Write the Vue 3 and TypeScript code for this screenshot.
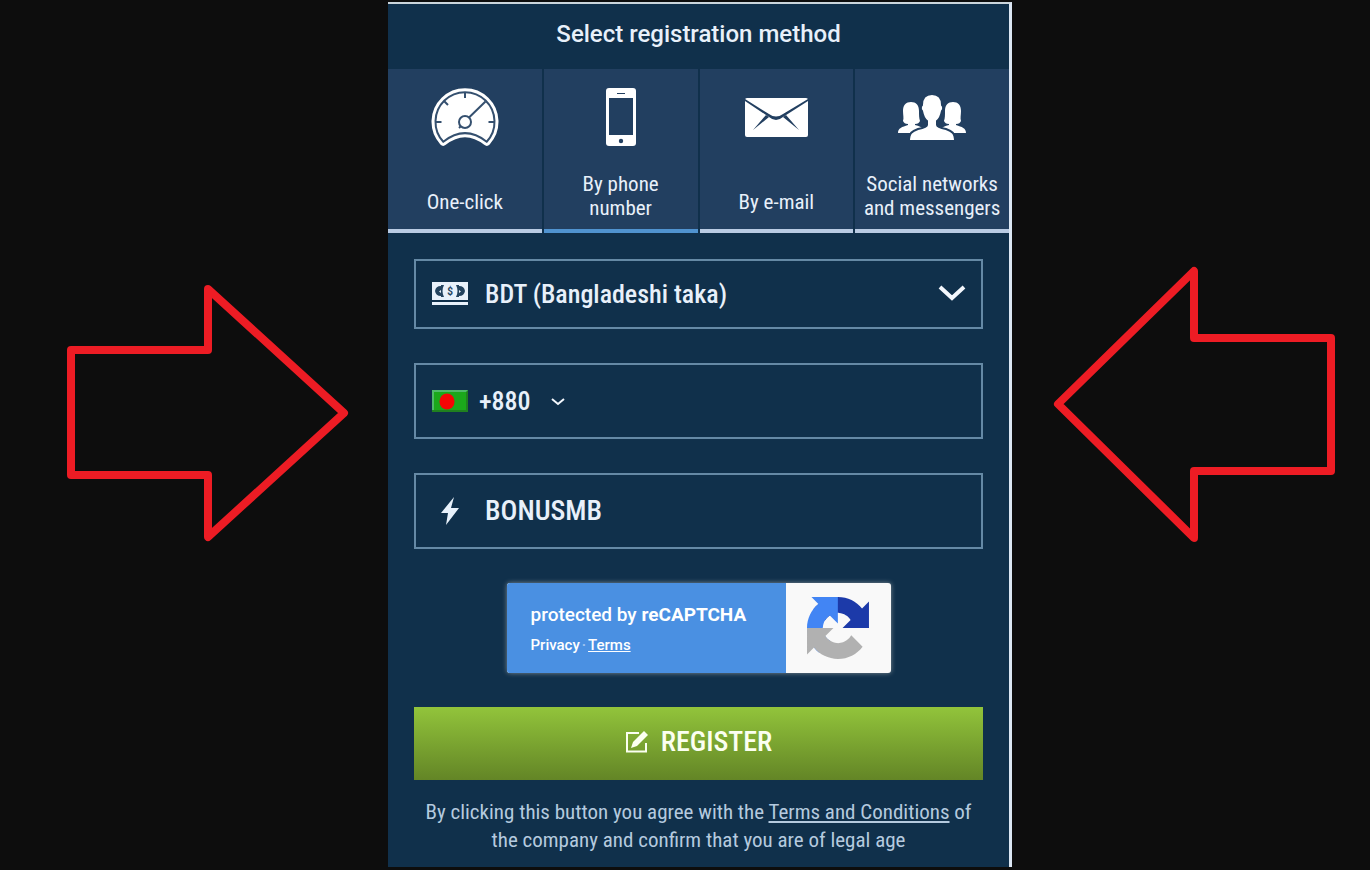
<script setup lang="ts">
import { ref } from 'vue'

type Method = 'click' | 'phone' | 'email' | 'social'

const methods: { id: Method; lines: string[] }[] = [
  { id: 'click', lines: ['One-click'] },
  { id: 'phone', lines: ['By phone', 'number'] },
  { id: 'email', lines: ['By e-mail'] },
  { id: 'social', lines: ['Social networks', 'and messengers'] },
]

const active = ref<Method>('phone')
const currency = ref('BDT')
const dialCode = ref('+880')
const phone = ref('')
const promo = ref('BONUSMB')
</script>

<template>
  <div class="stage">
    <svg class="arrow" viewBox="0 0 388 264" aria-hidden="true">
      <path d="M71 70H208V9L344 133L208 257V195H71Z" />
    </svg>

    <main class="panel">
      <h1 class="title">Select registration method</h1>

      <div class="tabs" role="tablist">
        <button
          v-for="m in methods"
          :key="m.id"
          type="button"
          role="tab"
          class="tab"
          :class="{ active: active === m.id }"
          :aria-selected="active === m.id"
          @click="active = m.id"
        >
          <svg v-if="m.id === 'click'" class="tab-icon" viewBox="0 0 70 60">
            <path class="gauge-body" d="M13.3 54.7A29.5 29.5 0 1 1 56.7 54.7Q35 37.5 13.3 54.7Z" />
            <path class="gauge-ring" d="M13.3 54.7A29.5 29.5 0 1 1 56.7 54.7Q35 37.5 13.3 54.7Z" />
            <path class="mark" d="M35 5v6M5.500 35h6M64.500 35h-6M14 14l4 4M39 30.500L55.500 14.500" />
            <circle class="mark hub" cx="35" cy="35" r="6" />
            <path class="mark" d="M31 39l-2 2" />
          </svg>
          <svg v-else-if="m.id === 'phone'" class="tab-icon" viewBox="0 0 70 60">
            <rect class="white" x="20" y="1" width="30" height="58" rx="3" />
            <rect class="navy" x="23" y="11" width="24" height="37" />
            <rect class="navy" x="31" y="6" width="8" height="1" />
            <circle class="navy" cx="35" cy="54" r="2.200" />
          </svg>
          <svg v-else-if="m.id === 'email'" class="tab-icon" viewBox="0 0 70 60">
            <rect class="white" x="4" y="11" width="63" height="39" rx="2" />
            <path class="fold" d="M4 12L28 27Q35 32 42 27L67 12V14L42 30Q35 36 28 30L4 14Z" />
            <path class="fold" d="M25 28L28 30L12 43ZM45 28L42 30L58 43Z" />
          </svg>
          <svg v-else class="tab-icon" viewBox="0 0 70 60">
            <path class="white" d="M1 46c0-5 4-6 10-8v-1c-3 0-4-1-5-3 1-3 0-6 0-10 0-6 3-9 8-9s8 3 8 9c0 4 0 7 1 10-1 2-2 3-5 3v1c4 1 7 2 8 4v4z" />
            <path class="white" d="M69 46c0-5-4-6-10-8v-1c3 0 4-1 5-3-1-3 0-6 0-10 0-6-3-9-8-9s-8 3-8 9c0 4 0 7-1 10 1 2 2 3 5 3v1c-4 1-7 2-8 4v4z" />
            <path class="person" d="M12 54c0-8 3-10 9-12 5-1 9-2 9-4v-4c-3-2-4-5-5-10-2-2-1-5 0-6 0-7 4-11 10-11s10 4 10 11c1 1 2 4 0 6-1 5-2 8-5 10v4c0 2 4 3 9 4 6 2 9 4 9 12z" />
          </svg>
          <span class="tab-label"><span v-for="l in m.lines" :key="l" class="line">{{ l }}</span></span>
        </button>
      </div>

      <form class="form" @submit.prevent>
        <div class="field short">
          <svg class="field-icon" viewBox="0 0 36 24" aria-hidden="true">
            <rect class="pale" width="36" height="18" />
            <path class="dark" d="M9 4A6 6 0 0 0 3 9a6 6 0 0 0 6 5V11L7 9.500 9 8zM27 4A6 6 0 0 1 33 9a6 6 0 0 1-6 5V11L29 9.500 27 8z" />
            <path class="dark" d="M9 3h3Q9 9 12 15h-3zM27 3h-3Q27 9 24 15h3z" />
            <text class="dollar" x="18" y="13">$</text>
            <rect class="pale" y="20" width="36" height="3" />
          </svg>
          <select v-model="currency" class="currency" aria-label="Currency">
            <option value="BDT">BDT (Bangladeshi taka)</option>
          </select>
          <svg class="chevron" viewBox="0 0 28 18" aria-hidden="true"><path d="M2 2L14 13L26 2" /></svg>
        </div>

        <div class="field">
          <svg class="field-icon" viewBox="0 0 36 24" aria-hidden="true">
            <rect class="flag" y="1" width="36" height="22" />
            <path class="flag-top" d="M0 1H36V3H2V22H0Z" />
            <path class="flag-low" d="M36 1V23H0V21H34V3Z" />
            <ellipse class="disc" cx="15" cy="12.500" rx="7.500" ry="8" />
          </svg>
          <select v-model="dialCode" class="code" aria-label="Country code">
            <option>+880</option>
          </select>
          <svg class="caret" viewBox="0 0 14 10" aria-hidden="true"><path d="M1 3L7 8L13 3" /></svg>
          <input v-model="phone" class="entry" type="tel" aria-label="Phone number" />
        </div>

        <div class="field">
          <svg class="field-icon" viewBox="0 0 36 28" aria-hidden="true">
            <path class="pale" d="M22 0L9 16H16L14 28L27 11H19Z" />
          </svg>
          <input v-model="promo" class="entry promo" type="text" aria-label="Promo code" />
        </div>

        <div class="captcha">
          <div class="captcha-info">
            <p class="protected">protected by <strong>reCAPTCHA</strong></p>
            <p class="links"><a href="#" class="plain">Privacy</a><span class="dot">·</span><a href="#">Terms</a></p>
          </div>
          <div class="captcha-logo">
            <svg viewBox="0 0 64 64" aria-hidden="true">
              <path fill="#1c3aa9" d="M64 31.955l-.033-1.370V4.687l-7.160 7.160C50.948 4.674 42.033.093 32.050.093c-10.400 0-19.622 4.960-25.458 12.640l11.736 11.860a15.550 15.550 0 0 1 4.754-5.334c2.050-1.600 4.952-2.906 8.968-2.906.485 0 .860.057 1.135.163 4.976.393 9.288 3.140 11.828 7.124l-8.307 8.307L64 31.953" />
              <path fill="#4285f4" d="M31.862.094l-1.370.033H4.594l7.160 7.160C4.580 13.147 0 22.060 0 32.046c0 10.400 4.960 19.622 12.640 25.458L24.500 45.768a15.550 15.550 0 0 1-5.334-4.754c-1.600-2.050-2.906-4.952-2.906-8.968 0-.485.057-.860.163-1.135.393-4.976 3.140-9.288 7.124-11.828l8.307 8.307L31.860.095" />
              <path fill="#b1b1b1" d="M.001 32.045l.033 1.370v25.898l7.160-7.160c5.860 7.173 14.774 11.754 24.760 11.754 10.400 0 19.622-4.960 25.458-12.640l-11.736-11.860a15.550 15.550 0 0 1-4.754 5.334c-2.050 1.600-4.952 2.906-8.968 2.906-.485 0-.860-.057-1.135-.163-4.976-.393-9.288-3.140-11.828-7.124l8.307-8.307c-10.522.040-22.400.066-27.295-.005" />
            </svg>
          </div>
        </div>

        <button type="submit" class="register">
          <svg viewBox="0 0 24 24" aria-hidden="true">
            <path class="sheet" d="M14 3H2V21.500H21V13" />
            <path class="pen" d="M6 18L8 12L19 1L23 5L12 16Z" />
          </svg>
          REGISTER
        </button>

        <p class="legal">
          By clicking this button you agree with the <a href="#">Terms and Conditions</a> of the company and confirm that you are of legal age
        </p>
      </form>
    </main>

    <svg class="arrow right" viewBox="0 0 358 278" aria-hidden="true">
      <path d="M46 139L182 6V73H319V206H182V273Z" />
    </svg>
  </div>
</template>

<style>
body {
  margin: 0;
  background: #0d0d0d;
}
</style>

<style scoped>
.stage {
  display: grid;
  grid-template-columns: 388fr 624fr 358fr;
  align-items: start;
  box-sizing: border-box;
  min-height: 100vh;
  padding: 2px 0 3px;
  background: #0d0d0d;
  font-family: "Roboto Condensed", "Liberation Sans Narrow", Roboto, sans-serif;
  font-weight: 500;
  color: #e8f0fa;
}
.arrow {
  width: 100%;
  margin-top: 278px;
}
.arrow.right {
  margin-top: 263px;
}
.arrow path {
  fill: none;
  stroke: #ed1c24;
  stroke-width: 8;
  stroke-linejoin: round;
}
.panel {
  min-width: 0;
  background: #10304b;
  border-top: 2px solid #cbd5dc;
  border-right: 3px solid #dbe6f3;
}
.title {
  margin: 0;
  padding-bottom: 5px;
  font: 500 24px/60px Roboto, sans-serif;
  text-align: center;
}
.tabs {
  display: grid;
  grid-template-columns: repeat(4, 1fr);
  gap: 2px;
}
.tab {
  display: flex;
  flex-direction: column;
  align-items: center;
  min-width: 0;
  height: 164px;
  padding: 18px 0 0;
  border: 0;
  border-bottom: 4px solid #b9cbe3;
  background: #223f60;
  color: inherit;
  font: inherit;
  font-size: 21px;
  font-weight: 400;
  line-height: 24px;
}
.tab.active {
  border-bottom-color: #5093d0;
}
.tab-icon {
  width: 70px;
  height: 60px;
}
.tab-label {
  display: flex;
  flex-direction: column;
  justify-content: center;
  height: 48px;
  margin-top: 25px;
  white-space: nowrap;
}
.tab-label .line:only-child {
  padding-top: 12px;
}
.white {
  fill: #fff;
}
.navy,
.fold {
  fill: #223f60;
}
.person {
  fill: #fff;
  stroke: #223f60;
  stroke-width: 2;
}
.gauge-body {
  fill: #fff;
  stroke: #fff;
  stroke-width: 8;
  stroke-linejoin: round;
}
.gauge-ring,
.mark {
  fill: none;
  stroke: #35506f;
  stroke-width: 2;
}
.mark.hub {
  fill: #fff;
}
.form {
  padding: 26px 26px 13px;
}
.field {
  display: flex;
  align-items: center;
  box-sizing: border-box;
  height: 76px;
  margin-bottom: 34px;
  padding-left: 16px;
  border: 2px solid #6589a5;
}
.field.short {
  height: 70px;
}
.field-icon {
  flex: none;
  width: 36px;
  height: 28px;
}
.pale {
  fill: #e8f1fb;
}
.dark {
  fill: #23435f;
}
.dollar {
  fill: #23435f;
  font: 700 10px Roboto, sans-serif;
  text-anchor: middle;
}
.flag {
  fill: #1ba81b;
}
.flag-top {
  fill: #4fb96a;
}
.flag-low {
  fill: #20801f;
}
.disc {
  fill: #f60505;
}
select,
.entry {
  appearance: none;
  min-width: 0;
  padding: 0;
  border: 0;
  outline: 0;
  background: transparent;
  color: inherit;
  font: inherit;
  font-size: 26px;
  line-height: 36px;
}
.currency {
  flex: 1;
  margin-left: 17px;
}
.chevron {
  width: 28px;
  height: 18px;
  margin-right: 15px;
}
.chevron path,
.caret path {
  fill: none;
  stroke: #f3f7fd;
  stroke-width: 4;
}
.caret path {
  stroke-width: 2;
}
.code {
  width: 54px;
  margin-left: 11px;
}
.caret {
  width: 14px;
  height: 10px;
  margin-left: 18px;
}
.entry {
  flex: 1;
  margin-left: 17px;
}
.entry.promo {
  font-size: 28px;
}
.captcha {
  display: flex;
  width: 384px;
  height: 90px;
  margin: 0 auto 34px;
  overflow: hidden;
  border-radius: 3px;
  background: #f9f9f9;
  box-shadow: 0 0 5px #7f8b93;
  font-family: Roboto, sans-serif;
  color: #fff;
}
.captcha-info {
  flex: 1;
  padding: 18px 0 0 24px;
  background: #4a90e2;
}
.captcha p {
  margin: 0;
}
.protected {
  font-size: 19px;
  line-height: 28px;
}
.protected strong {
  font-weight: 700;
}
.links {
  font-size: 15px;
  line-height: 32px;
}
.links a,
.legal a {
  color: inherit;
}
.links .plain {
  text-decoration: none;
}
.dot {
  margin: 0 2px;
  opacity: 0.5;
}
.captcha-logo {
  width: 105px;
  padding-top: 14px;
  text-align: center;
}
.captcha-logo svg {
  width: 62px;
  height: 62px;
}
.register {
  display: flex;
  align-items: center;
  justify-content: center;
  gap: 12px;
  width: 100%;
  height: 73px;
  padding: 0 0 4px;
  border: 0;
  background: linear-gradient(#92c43b, #638526);
  color: #fbfff0;
  font: inherit;
  font-size: 28px;
}
.register svg {
  width: 24px;
  height: 24px;
}
.sheet {
  fill: none;
  stroke: #fbfff0;
  stroke-width: 2;
}
.pen {
  fill: #fbfff0;
}
.legal {
  margin: 18px 0 0;
  font-size: 21px;
  font-weight: 400;
  line-height: 28px;
  text-align: center;
  color: #b5cadf;
}
</style>
